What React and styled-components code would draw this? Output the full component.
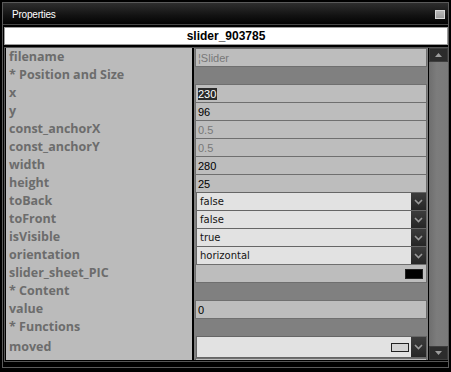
import React from "react";
import styled, { createGlobalStyle } from "styled-components";

const GlobalStyle = createGlobalStyle`
  html, body {
    margin: 0;
    padding: 0;
    background: #000;
  }
  body {
    width: 451px;
    height: 372px;
    overflow: hidden;
  }
`;

const Window = styled.div`
  width: 451px;
  height: 372px;
  box-sizing: border-box;
  padding: 2px 2px 4px 2px;
  background: #000;
`;

const Frame = styled.div`
  height: 100%;
  box-sizing: border-box;
  border: 1px solid #5a5a5a;
  display: flex;
  flex-direction: column;
`;

const TitleBar = styled.div`
  height: 22px;
  box-sizing: border-box;
  border-bottom: 1px solid #474747;
  background: linear-gradient(#2e2e2e, #121212 60%, #030303);
  display: flex;
  align-items: center;
  justify-content: space-between;
  padding: 2px 3px 0 9px;
`;

const TitleText = styled.span`
  color: #fff;
  font-family: "Liberation Sans", Arial, sans-serif;
  font-size: 10px;
  letter-spacing: -0.2px;
`;

const CloseBox = styled.span`
  width: 10px;
  height: 9px;
  box-sizing: border-box;
  border: 1px solid #d8d8d8;
  background: linear-gradient(#b8b8b8, #9c9c9c);
  margin-top: -1px;
`;

const Body = styled.div`
  flex: 1;
  min-height: 0;
  display: flex;
  flex-direction: column;
  gap: 2px;
  padding: 2px 0 5px 1px;
`;

const Header = styled.div`
  height: 18px;
  flex-shrink: 0;
  box-sizing: border-box;
  border: 1px solid #9c9c9c;
  background: #fff;
  color: #000;
  font-family: "Liberation Sans", Arial, sans-serif;
  font-weight: 700;
  font-size: 12px;
  line-height: 16px;
  text-align: center;
`;

const Main = styled.div`
  flex: 1;
  min-height: 0;
  display: flex;
  gap: 1px;
  border: 1px solid #555;
  border-right: none;
  padding: 0 0 1px 1px;
`;

const Pane = styled.div`
  width: 422px;
  overflow: hidden;
  display: flex;
  flex-direction: column;
  background: linear-gradient(
    to right,
    #bbbbbb 0 186px,
    #000 186px 188px,
    #808080 188px
  );
`;

const Row = styled.div`
  height: ${(p) => p.$h || 18}px;
  flex-shrink: 0;
  display: grid;
  grid-template-columns: 186px 234px;
  column-gap: 2px;
`;

const Label = styled.div`
  padding-left: 3px;
  font-family: "Open Sans", sans-serif;
  font-weight: 700;
  font-size: 12.5px;
  line-height: ${(p) => p.$h || 18}px;
  color: #6c6c6c;
  white-space: nowrap;
`;

const TextBox = styled.div`
  margin: 0 1px;
  height: ${(p) => (p.$h || 18) + 1}px;
  box-sizing: border-box;
  border: 1px solid #6f6f6f;
  background: #bdbdbd;
  display: flex;
  align-items: center;
  justify-content: space-between;
  padding: 0 3px 0 2px;
  font-family: "Liberation Sans", Arial, sans-serif;
  font-size: 11px;
  color: ${(p) => (p.$muted ? "#787878" : "#000")};
`;

const Selected = styled.span`
  background: #2a2a2a;
  color: #fff;
  padding-right: 1px;
`;

const Dropdown = styled.div`
  margin: 0 1px 0 2px;
  height: ${(p) => (p.$h || 18) + 1}px;
  box-sizing: border-box;
  border: 1px solid #666;
  background: #e2e2e2;
  display: flex;
  align-items: center;
  font-family: "DejaVu Sans", sans-serif;
  font-size: 10px;
  color: #141414;
`;

const DropText = styled.span`
  flex: 1;
  padding-left: 3px;
`;

const ArrowButton = styled.span`
  width: 15px;
  align-self: stretch;
  background: linear-gradient(#3c3c3c, #262626);
  display: flex;
  align-items: center;
  justify-content: center;
`;

const Swatch = styled.span`
  width: ${(p) => p.$w}px;
  height: ${(p) => p.$hh}px;
  box-sizing: border-box;
  background: ${(p) => p.$fill};
  border: 1px solid #222;
  margin-right: ${(p) => p.$mr || 0}px;
`;

const ScrollBar = styled.div`
  width: 19px;
  display: flex;
  flex-direction: column;
  justify-content: space-between;
  background: linear-gradient(to right, #6e6e6e, #7c7c7c 40%, #7a7a7a);
`;

const ScrollButton = styled.div`
  height: 14px;
  box-sizing: border-box;
  border: 1px solid #3e3e3e;
  background: #2c2c2c;
  display: flex;
  align-items: center;
  justify-content: center;
`;

const Chevron = () => (
  <svg width="9" height="6" viewBox="0 0 9 6">
    <path d="M1 1 L4.5 4.5 L8 1" fill="none" stroke="#9a9a9a" strokeWidth="1.6" />
  </svg>
);

const Tri = ({ down }) => (
  <svg width="7" height="4" viewBox="0 0 7 4">
    <path d={down ? "M0 0 H7 L3.5 4 Z" : "M0 4 H7 L3.5 0 Z"} fill="#9c9c9c" />
  </svg>
);

const rows = [
  { label: "filename", kind: "text", value: "¦Slider", muted: true },
  { label: "* Position and Size" },
  { label: "x", kind: "text", value: "230", selected: true },
  { label: "y", kind: "text", value: "96" },
  { label: "const_anchorX", kind: "text", value: "0.5", muted: true },
  { label: "const_anchorY", kind: "text", value: "0.5", muted: true },
  { label: "width", kind: "text", value: "280" },
  { label: "height", kind: "text", value: "25" },
  { label: "toBack", kind: "select", value: "false" },
  { label: "toFront", kind: "select", value: "false" },
  { label: "isVisible", kind: "select", value: "true" },
  { label: "orientation", kind: "select", value: "horizontal" },
  { label: "slider_sheet_PIC", kind: "pic" },
  { label: "* Content" },
  { label: "value", kind: "text", value: "0" },
  { label: "* Functions" },
  { label: "moved", kind: "func", h: 22 },
  { label: "", kind: "text", value: "" },
];

const ValueCell = ({ row }) => {
  if (row.kind === "text") {
    return (
      <TextBox $muted={row.muted}>
        {row.selected ? <Selected>{row.value}</Selected> : <span>{row.value}</span>}
      </TextBox>
    );
  }
  if (row.kind === "pic") {
    return (
      <TextBox>
        <span />
        <Swatch $w={18} $hh={10} $fill="#000" $mr={0} />
      </TextBox>
    );
  }
  if (row.kind === "select" || row.kind === "func") {
    return (
      <Dropdown $h={row.h ? row.h - 1 : 18}>
        <DropText>{row.value}</DropText>
        {row.kind === "func" && <Swatch $w={18} $hh={9} $fill="#d4d4d4" $mr={2} />}
        <ArrowButton>
          <Chevron />
        </ArrowButton>
      </Dropdown>
    );
  }
  return <div />;
};

const App = () => {
  return (
    <Window>
      <GlobalStyle />
      <Frame>
        <TitleBar>
          <TitleText>Properties</TitleText>
          <CloseBox />
        </TitleBar>
        <Body>
          <Header>slider_903785</Header>
          <Main>
            <Pane>
              {rows.map((row, i) => (
                <Row key={i} $h={row.h}>
                  <Label $h={row.h}>{row.label}</Label>
                  <ValueCell row={row} />
                </Row>
              ))}
            </Pane>
            <ScrollBar>
              <ScrollButton>
                <Tri />
              </ScrollButton>
              <ScrollButton>
                <Tri down />
              </ScrollButton>
            </ScrollBar>
          </Main>
        </Body>
      </Frame>
    </Window>
  );
};

export default App;
